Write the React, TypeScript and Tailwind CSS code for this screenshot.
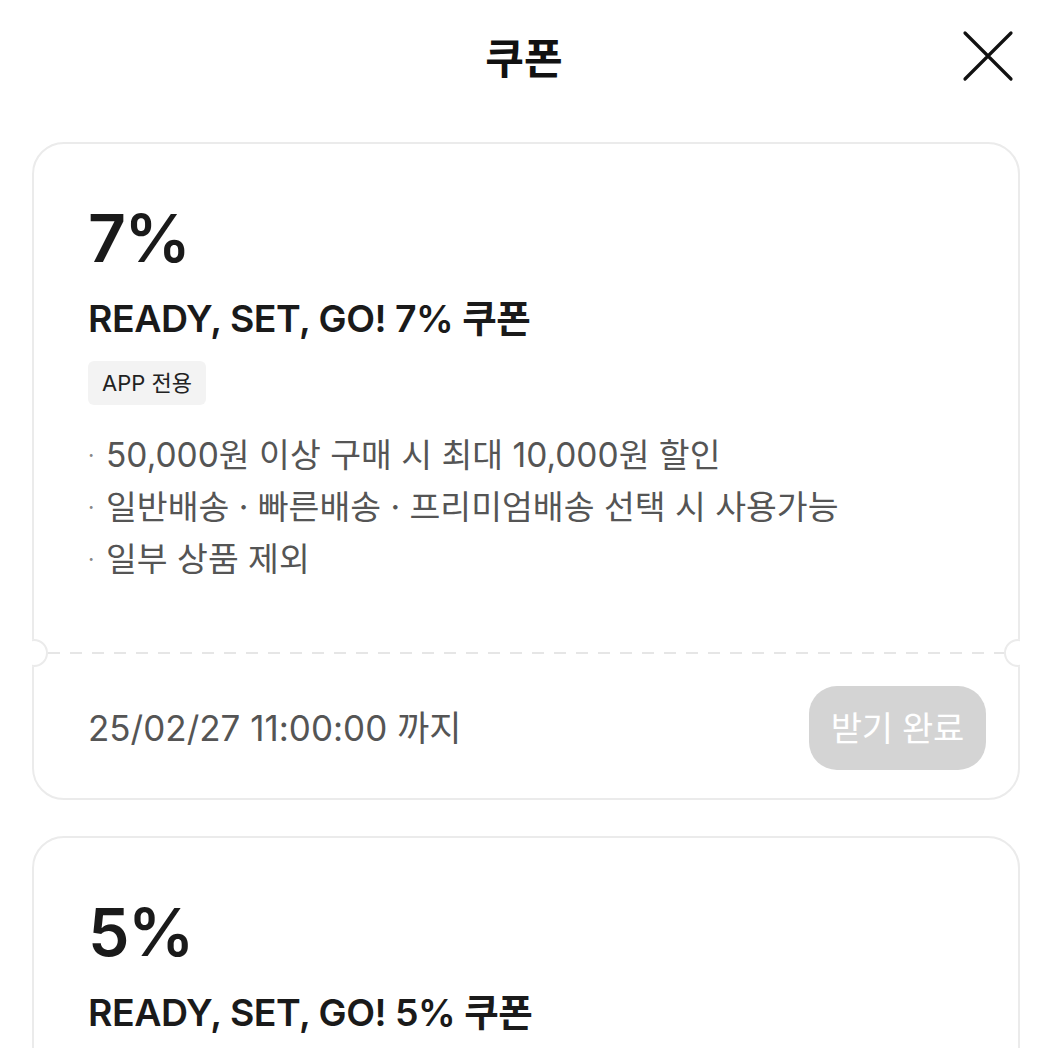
import React from "react";

const FONT = {
  fontFamily: '"Inter", "Noto Sans CJK KR", sans-serif',
};

interface Coupon {
  rate: string;
  title: string;
  badge: string;
  notes: string[];
  until: string;
}

const coupons: Coupon[] = [
  {
    rate: "7%",
    title: "READY, SET, GO! 7% 쿠폰",
    badge: "APP 전용",
    notes: [
      "50,000원 이상 구매 시 최대 10,000원 할인",
      "일반배송 · 빠른배송 · 프리미엄배송 선택 시 사용가능",
      "일부 상품 제외",
    ],
    until: "25/02/27 11:00:00 까지",
  },
  {
    rate: "5%",
    title: "READY, SET, GO! 5% 쿠폰",
    badge: "APP 전용",
    notes: [
      "30,000원 이상 구매 시 최대 5,000원 할인",
      "일반배송 · 빠른배송 · 프리미엄배송 선택 시 사용가능",
      "일부 상품 제외",
    ],
    until: "25/02/27 11:00:00 까지",
  },
];

function Notch({ side }: { side: "left" | "right" }) {
  return (
    <div
      className={
        "absolute top-[-13px] w-[16px] h-[28px] overflow-hidden bg-white " +
        (side === "left" ? "left-[-2px]" : "right-[-2px]")
      }
    >
      <div
        className={
          "absolute top-0 w-[28px] h-[28px] rounded-full border-2 border-[#ebebeb] bg-white " +
          (side === "left" ? "left-[-12px]" : "right-[-12px]")
        }
      />
    </div>
  );
}

function CouponCard({ c }: { c: Coupon }) {
  return (
    <div className="relative rounded-[32px] border-2 border-[#ebebeb] bg-white">
      <div className="px-[54px] pt-[52px] pb-[67px]">
        <div className="text-[66px] leading-[84px] font-semibold text-[#1a1a1a] tracking-[-1.5px]">
          {c.rate}
        </div>
        <div className="mt-[17px] text-[37.5px] leading-[44px] font-semibold text-[#1a1a1a] tracking-[-0.5px]">
          {c.title}
        </div>
        <div className="mt-[20px] inline-flex items-center h-[44px] px-[14px] rounded-[6px] bg-[#f3f3f3] text-[22px] text-[#222]">
          {c.badge}
        </div>
        <ul className="mt-[24px] flex flex-col">
          {c.notes.map((n) => (
            <li
              key={n}
              className="flex items-center text-[33.5px] leading-[52px] text-[#555] tracking-[0px]"
            >
              <span className="w-[18px] text-[22px] text-[#888]">·</span>
              {n}
            </li>
          ))}
        </ul>
      </div>
      <div className="relative">
        <div className="mx-[14px] h-[2px] bg-[linear-gradient(to_right,#e6e6e6_12px,transparent_12px)] bg-[length:22px_2px]" />
        <Notch side="left" />
        <Notch side="right" />
      </div>
      <div className="flex items-center justify-between pl-[54px] pr-[32px] pt-[32px] pb-[28px]">
        <span className="text-[35px] text-[#555] tracking-[0px]">
          {c.until}
        </span>
        <button
          type="button"
          className="h-[84px] px-[22px] rounded-[28px] bg-[#d4d4d4] text-[34px] text-white tracking-[-0.3px]"
        >
          받기 완료
        </button>
      </div>
    </div>
  );
}

export default function App() {
  return (
    <div className="w-[1048px] h-[1048px] overflow-hidden bg-white" style={FONT}>
      <div className="relative flex items-center justify-center h-[116px]">
        <span className="text-[42px] font-bold text-[#111]">쿠폰</span>
        <button
          type="button"
          aria-label="닫기"
          className="absolute right-[34px] top-[30px] w-[52px] h-[52px]"
        >
          <svg viewBox="0 0 52 52" width="52" height="52" fill="none">
            <path
              d="M3 3 L49 49 M49 3 L3 49"
              stroke="#111"
              strokeWidth="3.2"
              strokeLinecap="round"
            />
          </svg>
        </button>
      </div>
      <div className="flex flex-col gap-[36px] px-[32px] pt-[26px] w-[1052px]">
        {coupons.map((c) => (
          <CouponCard key={c.rate} c={c} />
        ))}
      </div>
    </div>
  );
}
